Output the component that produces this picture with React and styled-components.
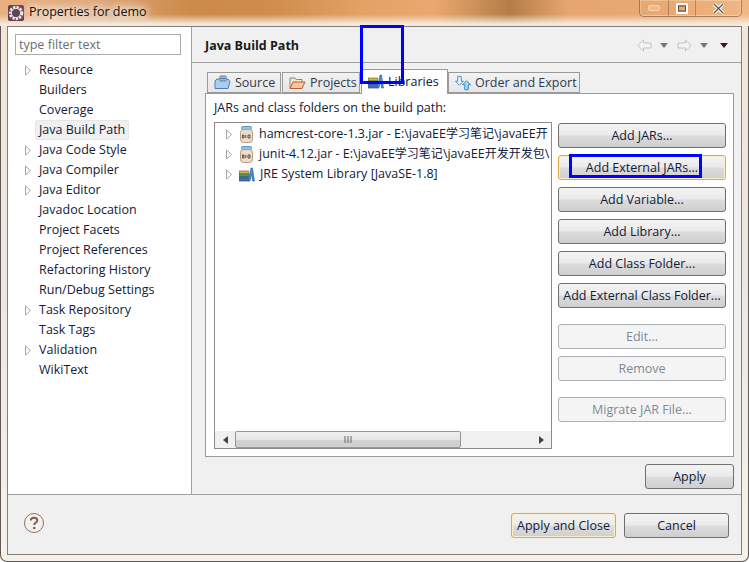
import styled, { createGlobalStyle } from "styled-components";

const GlobalStyle = createGlobalStyle`
  html, body {
    margin: 0;
    padding: 0;
    background: #fff;
  }
  * {
    box-sizing: border-box;
  }
`;

const treeItems = [
  { label: "Resource", arrow: true },
  { label: "Builders" },
  { label: "Coverage" },
  { label: "Java Build Path", selected: true },
  { label: "Java Code Style", arrow: true },
  { label: "Java Compiler", arrow: true },
  { label: "Java Editor", arrow: true },
  { label: "Javadoc Location" },
  { label: "Project Facets" },
  { label: "Project References" },
  { label: "Refactoring History" },
  { label: "Run/Debug Settings" },
  { label: "Task Repository", arrow: true },
  { label: "Task Tags" },
  { label: "Validation", arrow: true },
  { label: "WikiText" },
];

const Arrow = () => (
  <svg width="8" height="11" viewBox="0 0 8 11">
    <path d="M1.5 1 L6.5 5.5 L1.5 10 Z" fill="#fff" stroke="#a6a6a6" />
  </svg>
);

const AppIcon = () => (
  <svg width="16" height="16" viewBox="0 0 18 18">
    <rect x="0" y="0" width="18" height="18" rx="2" fill="#6d3b55" />
    <circle cx="9" cy="9" r="6.5" fill="none" stroke="#e8e6e4" strokeWidth="3.2" strokeDasharray="2.6 1.2" />
    <circle cx="9" cy="9" r="5.2" fill="#5a4650" stroke="#f4f2f0" />
  </svg>
);

const JarIcon = () => (
  <svg width="15" height="17" viewBox="0 0 15 17">
    <rect x="2.5" y="0.5" width="10" height="3" rx="1" fill="#8fc4e4" stroke="#5c9ac4" />
    <rect x="1.5" y="3.5" width="12" height="13" rx="3" fill="#ecdccb" stroke="#b89b84" />
    <path d="M3.5 9 H5 V12 H3.5 Z M6.8 9 V12 M9 9 H11 V12 H9 Z" fill="none" stroke="#5a4030" strokeWidth="0.9" />
  </svg>
);

const BooksIcon = () => (
  <svg width="16" height="15" viewBox="0 0 16 15">
    <rect x="0.5" y="4" width="9" height="3" fill="#d8b23c" stroke="#8a6d20" strokeWidth="0.7" />
    <rect x="0.5" y="7" width="9" height="3" fill="#4f9a62" stroke="#2e6a3f" strokeWidth="0.7" />
    <rect x="0.5" y="10" width="9" height="4" fill="#3f6fb5" stroke="#2a4c85" strokeWidth="0.7" />
    <path d="M9 14 L12 1 L13.5 1 L15.5 14 L13.5 14 L12.5 7 L11 14 Z" fill="#4a8fd0" stroke="#2a6098" strokeWidth="0.6" />
  </svg>
);

const SourceIcon = () => (
  <svg width="17" height="15" viewBox="0 0 17 15">
    <path d="M1 13.5 L1 6 L3 4 L14 4 L16 6.5 L14 13.5 Z" fill="#a9cdee" stroke="#4c7fb5" />
    <path d="M6 1 H12 V6 H6 Z M8 1 V6 M10 1 V6 M6 3.5 H12" fill="#dbe9f6" stroke="#4c6f96" strokeWidth="0.8" />
  </svg>
);

const FolderIcon = () => (
  <svg width="17" height="15" viewBox="0 0 17 15">
    <path d="M1 13.5 V3 H6 L7.5 4.5 H13 V7" fill="#f7e6c4" stroke="#8f8578" />
    <path d="M1 13.5 L4 7 H16 L13 13.5 Z" fill="#f1c6a0" stroke="#b5623a" />
  </svg>
);

const OrderIcon = () => (
  <svg width="16" height="16" viewBox="0 0 18 18">
    <path d="M3 1.5 H7 V7 H9.5 L5 11.5 L0.5 7 H3 Z" fill="#e6f1fa" stroke="#4c7fb5" />
    <path d="M11 16.5 H15 V11 H17.5 L13 6.5 L8.5 11 H11 Z" fill="#a9d8f2" stroke="#2f7fb5" />
  </svg>
);

const NavArrow = ({ flip }) => (
  <svg width="15" height="13" viewBox="0 0 15 13" style={flip ? { transform: "scaleX(-1)" } : undefined}>
    <path d="M0.8 6.5 L6.5 1 V4 H14 V9 H6.5 V12 Z" fill="#f3f3f3" stroke="#c2c2c2" />
  </svg>
);

const HelpIcon = () => (
  <svg width="20" height="20" viewBox="0 0 20 20">
    <circle cx="10" cy="10" r="9.5" fill="#f4f2f1" stroke="#93705c" />
    <path d="M6.8 7.6 C6.8 5.6 8.2 4.7 10 4.7 C11.9 4.7 13.3 5.7 13.3 7.4 C13.3 9.6 10.2 9.7 10.2 12" fill="none" stroke="#84604c" strokeWidth="2" />
    <circle cx="10.2" cy="15" r="1.3" fill="#84604c" />
  </svg>
);

function App() {
  return (
    <Window>
      <GlobalStyle />
      <TitleBar>
        <AppIcon />
        <TitleText>Properties for demo</TitleText>
        <WindowControls>
          <ControlButton $width={28}>
            <svg width="12" height="6" viewBox="0 0 12 6">
              <rect x="0.5" y="0.5" width="11" height="5" rx="1" fill="#eeb98c" stroke="#f3d5b9" />
            </svg>
          </ControlButton>
          <ControlButton $width={27}>
            <svg width="12" height="11" viewBox="0 0 12 11">
              <rect x="1" y="1" width="10" height="9" fill="none" stroke="#fff" strokeWidth="2" />
              <rect x="2.5" y="3" width="7" height="5" fill="none" stroke="#554a42" />
            </svg>
          </ControlButton>
          <ControlButton $width={46}>
            <svg width="13" height="11" viewBox="0 0 13 11">
              <path d="M2 1 L11 10 M11 1 L2 10" stroke="#fff" strokeWidth="3.4" />
              <path d="M2 1 L11 10 M11 1 L2 10" stroke="#5b5048" strokeWidth="1.2" />
            </svg>
          </ControlButton>
        </WindowControls>
      </TitleBar>

      <Frame>
        <Client>
          <Main>
            <Sidebar>
              <FilterInput placeholder="type filter text" />
              <Tree>
                {treeItems.map((item) => (
                  <TreeRow key={item.label}>
                    <ArrowSlot>{item.arrow && <Arrow />}</ArrowSlot>
                    <TreeLabel $selected={item.selected}>{item.label}</TreeLabel>
                  </TreeRow>
                ))}
              </Tree>
            </Sidebar>

            <Content>
              <Header>
                <HeaderTitle>Java Build Path</HeaderTitle>
                <NavIcons>
                  <NavArrow />
                  <Caret $gap={8} />
                  <NavArrow flip />
                  <Caret $gap={8} />
                  <Caret $gap={3} $dark />
                </NavIcons>
              </Header>

              <Body>
                <Tabs>
                  <Tab $width={74}>
                    <SourceIcon />
                    Source
                  </Tab>
                  <Tab $width={78}>
                    <FolderIcon />
                    Projects
                  </Tab>
                  <Tab $width={87} $active>
                    <BooksIcon />
                    Libraries
                  </Tab>
                  <Tab $width={132}>
                    <OrderIcon />
                    Order and Export
                  </Tab>
                </Tabs>

                <Panel>
                  <PanelLabel>JARs and class folders on the build path:</PanelLabel>
                  <PanelColumns>
                    <Table>
                      <TableRows>
                        <TableRow>
                          <Arrow />
                          <JarIcon />
                          <RowText>hamcrest-core-1.3.jar - E:\javaEE<Cjk>学习笔记</Cjk>\javaEE<Cjk>开</Cjk></RowText>
                        </TableRow>
                        <TableRow>
                          <Arrow />
                          <JarIcon />
                          <RowText>junit-4.12.jar - E:\javaEE<Cjk>学习笔记</Cjk>\javaEE<Cjk>开发开发包</Cjk>\</RowText>
                        </TableRow>
                        <TableRow>
                          <Arrow />
                          <BooksIcon />
                          <RowText>JRE System Library [JavaSE-1.8]</RowText>
                        </TableRow>
                      </TableRows>
                      <ScrollBar>
                        <ScrollArrow>
                          <svg width="5" height="8" viewBox="0 0 5 8"><path d="M5 0 V8 L0 4 Z" fill="#444" /></svg>
                        </ScrollArrow>
                        <ScrollThumb>
                          <svg width="9" height="7" viewBox="0 0 9 7"><path d="M1 0 V7 M4 0 V7 M7 0 V7" stroke="#666" /></svg>
                        </ScrollThumb>
                        <ScrollArrow $end>
                          <svg width="5" height="8" viewBox="0 0 5 8"><path d="M0 0 V8 L5 4 Z" fill="#444" /></svg>
                        </ScrollArrow>
                      </ScrollBar>
                    </Table>

                    <ButtonColumn>
                      <Button>Add JARs...</Button>
                      <Button $focused>Add External JARs...</Button>
                      <Button>Add Variable...</Button>
                      <Button>Add Library...</Button>
                      <Button>Add Class Folder...</Button>
                      <Button>Add External Class Folder...</Button>
                      <Button disabled $spaced>Edit...</Button>
                      <Button disabled>Remove</Button>
                      <Button disabled $spaced>Migrate JAR File...</Button>
                    </ButtonColumn>
                  </PanelColumns>
                </Panel>

                <ApplyRow>
                  <Button $width={89}>Apply</Button>
                </ApplyRow>
              </Body>
            </Content>
          </Main>

          <Footer>
            <HelpIcon />
            <FooterButtons>
              <Button $width={105} $focused>Apply and Close</Button>
              <Button $width={105}>Cancel</Button>
            </FooterButtons>
          </Footer>
        </Client>
      </Frame>

      <Annotation $left={360} $top={25} $width={44} $height={59} />
      <Annotation $left={569} $top={154} $width={133} $height={24} />
    </Window>
  );
}

const fontStack = `"Open Sans", "Noto Sans CJK SC", sans-serif`;

const Window = styled.div`
  position: relative;
  width: 749px;
  height: 562px;
  overflow: hidden;
  display: flex;
  flex-direction: column;
  border-radius: 0 0 7px 7px;
  background: linear-gradient(to bottom, #f3e6d6 0%, #ece7e2 50%, #f6f2e9 100%);
  box-shadow: inset 0 0 0 1px #5f5a55;
  font-family: ${fontStack};
  font-size: 12.5px;
  color: #10203a;
`;

const TitleBar = styled.div`
  height: 26px;
  flex: none;
  display: flex;
  align-items: flex-start;
  gap: 5px;
  padding: 4px 0 0 8px;
  background:
    linear-gradient(to bottom, rgba(246, 236, 224, 0) 55%, rgba(246, 236, 224, 0.95) 92%),
    linear-gradient(to right, #e8b080 0%, #e0a878 12%, #cc8a48 26%, #cf8c4c 36%, #e2a264 48%, #e9a86f 58%, #b57d47 68%, #e7a671 76%, #e9a972 90%, #efb885 100%);
  & > svg {
    margin-top: 1px;
  }
`;

const TitleText = styled.span`
  font-size: 12.5px;
  line-height: 16px;
  color: #111;
  text-shadow: 0 0 6px #fff, 0 0 10px #fff, 0 0 14px #fff, 0 0 18px #fff;
`;

const WindowControls = styled.div`
  margin: -4px 7px 0 auto;
  height: 17px;
  display: flex;
  border: 1px solid rgba(120, 85, 55, 0.6);
  border-top: none;
  border-radius: 0 0 5px 5px;
  box-shadow: inset 0 0 0 1px rgba(255, 235, 210, 0.35);
`;

const ControlButton = styled.div`
  width: ${(p) => p.$width}px;
  display: flex;
  align-items: center;
  justify-content: center;
  & + & {
    border-left: 1px solid rgba(120, 85, 55, 0.45);
  }
`;

const Frame = styled.div`
  flex: 1;
  min-height: 0;
  display: flex;
  padding: 0 7px 7px;
`;

const Client = styled.div`
  flex: 1;
  display: flex;
  flex-direction: column;
  border: 1px solid #80807c;
  background: #f0f0f0;
`;

const Main = styled.div`
  height: 468px;
  flex: none;
  display: flex;
  border-bottom: 1px solid #a0a0a0;
`;

const Sidebar = styled.div`
  width: 184px;
  flex: none;
  padding: 7px 0 0 7px;
  background: #fff;
  border-right: 1px solid #a0a0a0;
`;

const FilterInput = styled.input`
  display: block;
  width: 166px;
  height: 21px;
  padding: 0 3px;
  border: 1px solid #ababab;
  border-radius: 0;
  outline: none;
  font: inherit;
  background: #fff;
  &::placeholder {
    color: #6d6d6d;
    opacity: 1;
  }
`;

const Tree = styled.div`
  margin-top: 5px;
  padding-left: 9px;
`;

const TreeRow = styled.div`
  height: 20px;
  display: flex;
  align-items: center;
`;

const ArrowSlot = styled.div`
  width: 11px;
  display: flex;
  align-items: center;
`;

const TreeLabel = styled.span`
  padding: 0 4px;
  height: 20px;
  line-height: 19px;
  white-space: nowrap;
  border-radius: 2px;
  ${(p) => p.$selected && "background: #f0f0f0; border: 1px solid #e6e6e6; padding: 0 3px; line-height: 17px;"}
`;

const Content = styled.div`
  flex: 1;
  min-width: 0;
  display: flex;
  flex-direction: column;
`;

const Header = styled.div`
  height: 36px;
  flex: none;
  display: flex;
  align-items: center;
  justify-content: space-between;
  padding: 2px 13px 0 13px;
  border-bottom: 1px solid #a0a0a0;
`;

const HeaderTitle = styled.h1`
  margin: 0;
  font-size: 12.5px;
  font-weight: 700;
  color: #1a1a1a;
`;

const NavIcons = styled.div`
  display: flex;
  align-items: center;
`;

const Caret = styled.span`
  width: 0;
  height: 0;
  margin: 0 ${(p) => (p.$dark ? 0 : 9)}px 0 ${(p) => p.$gap}px;
  border-left: 4px solid transparent;
  border-right: 4px solid transparent;
  border-top: 5px solid ${(p) => (p.$dark ? "#3c1230" : "#777")};
`;

const Body = styled.div`
  flex: 1;
  min-height: 0;
  display: flex;
  flex-direction: column;
  padding: 6px 7px 0 13px;
`;

const Tabs = styled.div`
  height: 24px;
  flex: none;
  display: flex;
  align-items: flex-end;
  padding-left: 2px;
  position: relative;
  z-index: 1;
`;

const Tab = styled.div`
  width: ${(p) => p.$width}px;
  height: ${(p) => (p.$active ? 25 : 21)}px;
  margin-bottom: ${(p) => (p.$active ? -1 : 0)}px;
  margin-right: ${(p) => (p.$active ? 0 : 1)}px;
  display: flex;
  align-items: center;
  gap: 4px;
  padding-left: 6px;
  padding-bottom: ${(p) => (p.$active ? 2 : 0)}px;
  white-space: nowrap;
  border: 1px solid #9a9a98;
  border-bottom: ${(p) => (p.$active ? "none" : "1px solid #9a9a98")};
  background: ${(p) => (p.$active ? "#fff" : "linear-gradient(to bottom, #f2f2f2, #e6e6e6)")};
  color: ${(p) => (p.$active ? "#10203a" : "#2c3a50")};
`;

const Panel = styled.div`
  height: 364px;
  flex: none;
  padding: 6px 7px 7px 8px;
  background: #fff;
  border: 1px solid #9a9a98;
  display: flex;
  flex-direction: column;
`;

const PanelLabel = styled.div`
  height: 16px;
  line-height: 16px;
  margin-bottom: 6px;
  white-space: nowrap;
`;

const PanelColumns = styled.div`
  flex: 1;
  min-height: 0;
  display: flex;
  gap: 6px;
`;

const Table = styled.div`
  width: 338px;
  flex: none;
  display: flex;
  flex-direction: column;
  border: 1px solid #8f8b88;
  overflow: hidden;
`;

const TableRows = styled.div`
  flex: 1;
  padding-top: 1px;
`;

const TableRow = styled.div`
  height: 20px;
  display: flex;
  align-items: center;
  padding-left: 10px;
  white-space: nowrap;
  overflow: hidden;
  & > svg:nth-child(2) {
    margin-left: 6px;
    flex: none;
  }
  & > svg:first-child {
    flex: none;
  }
`;

const RowText = styled.span`
  margin-left: 5px;
  line-height: 16px;
`;

const Cjk = styled.span`
  font-size: 12px;
  line-height: 12px;
`;

const ScrollBar = styled.div`
  height: 17px;
  flex: none;
  display: flex;
  background: #f0f0f0;
`;

const ScrollArrow = styled.div`
  width: 20px;
  display: flex;
  align-items: center;
  justify-content: center;
  ${(p) => p.$end && "margin-left: auto;"}
`;

const ScrollThumb = styled.div`
  width: 226px;
  display: flex;
  align-items: center;
  justify-content: center;
  border: 1px solid #979797;
  border-radius: 2px;
  background: linear-gradient(to bottom, #f0f0f0 0%, #e6e6e6 50%, #d2d2d2 51%, #cfcfcf 100%);
`;

const ButtonColumn = styled.div`
  width: 168px;
  flex: none;
  display: flex;
  flex-direction: column;
  gap: 7px;
  padding-top: 1px;
`;

const Button = styled.button`
  width: ${(p) => (p.$width ? `${p.$width}px` : "100%")};
  height: 25px;
  flex: none;
  padding: 0 2px;
  font: inherit;
  white-space: nowrap;
  color: #10203a;
  border: 1px solid ${(p) => (p.$focused ? "#ddac3c" : "#707070")};
  border-radius: 3px;
  background: linear-gradient(to bottom, #f3f3f3 0%, #ebebeb 48%, #dcdcdc 52%, #cfcfcf 100%);
  ${(p) => p.$focused && "box-shadow: inset 0 0 0 1px #fbeecb;"}
  ${(p) => p.$spaced && "margin-top: 9px;"}
  &:disabled {
    color: #7f8a98;
    border-color: #adb2b5;
    background: #f4f4f4;
  }
`;

const ApplyRow = styled.div`
  display: flex;
  justify-content: flex-end;
  margin-top: 7px;
`;

const Footer = styled.div`
  flex: 1;
  display: flex;
  align-items: flex-start;
  justify-content: space-between;
  padding: 18px 12px 0 16px;
`;

const FooterButtons = styled.div`
  display: flex;
  gap: 8px;
`;

const Annotation = styled.div`
  position: absolute;
  left: ${(p) => p.$left}px;
  top: ${(p) => p.$top}px;
  width: ${(p) => p.$width}px;
  height: ${(p) => p.$height}px;
  border: 3px solid #0000ff;
  pointer-events: none;
  z-index: 5;
`;

export default App;
